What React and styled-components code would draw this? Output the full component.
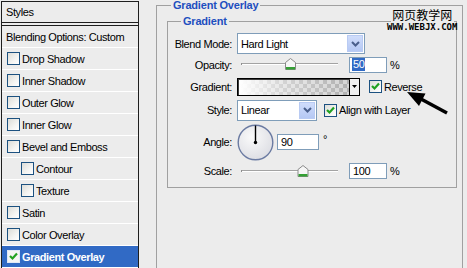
import React from 'react';
import styled, { createGlobalStyle } from 'styled-components';

const GlobalStyle = createGlobalStyle`
  html, body { margin: 0; padding: 0; background: #ececec; overflow: hidden; }
  body {
    font-family: "Liberation Sans", Arial, sans-serif;
    font-size: 11px;
    color: #000;
    letter-spacing: -0.4px;
  }
  * { box-sizing: border-box; }
`;

const Page = styled.div`
  position: relative;
  width: 467px;
  height: 268px;
  overflow: hidden;
  display: flex;
  align-items: flex-start;
  background: #ececec;
`;

/* ---------- left styles list ---------- */
const StylesPanel = styled.nav`
  margin: 1px 0 0 1px;
  width: 138px;
  height: 267px;
  border: 1px solid #1e1e1e;
  border-bottom: none;
  display: flex;
  flex-direction: column;
`;

const PanelHeader = styled.div`
  height: 22px;
  padding-left: 4px;
  display: flex;
  align-items: center;
  border-bottom: 1px solid #1e1e1e;
`;

const HeaderRule = styled.div`
  margin-top: 2px;
  height: 1px;
  border-top: 1px solid #1e1e1e;
`;

const ListRow = styled.div`
  flex: none;
  height: 22px;
  display: flex;
  align-items: center;
  gap: 2px;
  padding-left: ${(p) => p.$indent}px;
  border-bottom: 1px solid #ffffff;
  background: ${(p) => (p.$selected ? '#316ac5' : 'transparent')};
  color: ${(p) => (p.$selected ? '#ffffff' : '#000')};
  font-weight: ${(p) => (p.$selected ? 'bold' : 'normal')};
`;

const Box = styled.span`
  flex: none;
  width: 13px;
  height: 13px;
  border: 1px solid ${(p) => (p.$onDark ? '#dfe7f5' : '#1c5180')};
  background: ${(p) =>
    p.$onDark ? '#f4f4f4' : 'linear-gradient(135deg, #dcdcd7 0%, #f4f4f2 60%, #ffffff 100%)'};
  display: flex;
  align-items: center;
  justify-content: center;
`;

const Check = () => (
  <svg width="9" height="9" viewBox="0 0 9 9">
    <polyline points="1,4 3.5,6.5 8,1.5" fill="none" stroke="#21a121" strokeWidth="2.2" />
  </svg>
);

const Checkbox = ({ checked, onDark }) => (
  <Box $onDark={onDark}>{checked && <Check />}</Box>
);

/* ---------- right options ---------- */
const OuterGroup = styled.fieldset`
  margin: 0 0 0 17px;
  padding: 0;
  width: 307px;
  height: 300px;
  border: 1px solid #a0a0a0;
  border-bottom: none;
  min-inline-size: auto;
`;

const GroupTitle = styled.legend`
  margin-left: ${(p) => p.$offset}px;
  padding: 0 2px;
  font-weight: bold;
  color: #1e4fbf;
  font-size: 11px;
  line-height: 11px;
  letter-spacing: -0.2px;
`;

const InnerGroup = styled.fieldset`
  margin: 5px 0 0 10px;
  padding: 6px 0 7px 0;
  width: 290px;
  border: 1px solid #a0a0a0;
  min-inline-size: auto;
`;

const Form = styled.div`
  display: grid;
  grid-template-columns: 64px auto;
  grid-template-rows: 21px 21px 23px 24px 40px 18px;
  column-gap: 5px;
  align-items: center;
`;

const Label = styled.span`
  text-align: right;
  white-space: nowrap;
`;

const Control = styled.div`
  display: flex;
  align-items: center;
  height: 100%;
`;

const SelectBox = styled.div`
  width: ${(p) => p.$w}px;
  height: 21px;
  border: 1px solid #7f9db9;
  background: #fff;
  display: flex;
  align-items: center;
  justify-content: space-between;
  padding: 0 1px 0 3px;
`;

const SelectButton = styled.span`
  width: 16px;
  height: 17px;
  background: linear-gradient(#d0ddfb, #b5c8f4);
  border: 1px solid #b9cbf3;
  display: flex;
  align-items: center;
  justify-content: center;
`;

const Select = ({ w, value }) => (
  <SelectBox $w={w}>
    <span>{value}</span>
    <SelectButton>
      <svg width="9" height="6" viewBox="0 0 9 6">
        <polyline points="1,1 4.5,4.5 8,1" fill="none" stroke="#4a5f8c" strokeWidth="2" />
      </svg>
    </SelectButton>
  </SelectBox>
);

const NumberField = styled.div`
  margin-left: ${(p) => p.$ml}px;
  width: ${(p) => p.$w}px;
  height: 16px;
  border: 1px solid #7f9db9;
  background: #fff;
  display: flex;
  align-items: center;
  padding-left: 3px;
`;

const Selected = styled.span`
  background: #316ac5;
  color: #fff;
  line-height: 13px;
  padding: 0 1px;
  margin-left: -1px;
`;

const Unit = styled.span`
  margin-left: ${(p) => p.$ml}px;
  align-self: ${(p) => (p.$raised ? 'flex-start' : 'auto')};
  margin-top: ${(p) => (p.$raised ? '11px' : '0')};
`;

const SliderSvg = styled.svg`
  margin-left: 4px;
  flex: none;
`;

const Slider = ({ pos }) => (
  <SliderSvg width="98" height="13" viewBox="0 0 98 13">
    <rect x="0" y="5" width="97" height="1" fill="#a3a3a3" />
    <rect x="0" y="6" width="97" height="1" fill="#ffffff" />
    <rect x="0" y="5" width="1" height="2" fill="#8f8f8f" />
    <g transform={`translate(${pos - 5.5},0)`}>
      <path d="M0.5 4.5 L5.5 0.5 L10.5 4.5 V11.5 H0.5 Z" fill="#f6f6f6" stroke="#8a8a8a" />
      <rect x="1" y="9" width="9" height="2.5" fill="#34a034" />
    </g>
  </SliderSvg>
);

const GradientBar = styled.div`
  width: 123px;
  height: 18px;
  display: flex;
  border: 1px solid #000;
  box-shadow: inset 1px 1px 0 #3c3c3c;
`;

const GradientFill = styled.div`
  flex: 1;
  margin: 1px 0 0 1px;
  border-right: 1px solid #000;
  background:
    linear-gradient(to right, #ffffff 0%, rgba(255, 255, 255, 0.45) 40%, rgba(255, 255, 255, 0) 100%),
    repeating-conic-gradient(#b0b0b0 0 25%, #d4d4d4 0 50%) 0 0 / 8px 8px;
`;

const GradientArrow = styled.div`
  width: 9px;
  background: #f0f0f0;
  display: flex;
  align-items: center;
  justify-content: center;
`;

const Inline = styled.span`
  margin-left: ${(p) => p.$ml}px;
  display: inline-flex;
`;

const TextAfter = styled.span`
  margin-left: ${(p) => p.$ml}px;
  white-space: nowrap;
`;

const DialSvg = styled.svg`
  flex: none;
`;

const Dial = () => (
  <DialSvg width="37" height="37" viewBox="0 0 37 37">
    <defs>
      <radialGradient id="dialFill" cx="40%" cy="35%" r="70%">
        <stop offset="0" stopColor="#fafafa" />
        <stop offset="1" stopColor="#dcdde3" />
      </radialGradient>
    </defs>
    <circle cx="18.5" cy="18.5" r="17.3" fill="url(#dialFill)" stroke="#6b7ba2" strokeWidth="1.4" />
    <line x1="18.5" y1="1.5" x2="18.5" y2="18.5" stroke="#000" strokeWidth="1.4" />
    <circle cx="18.5" cy="18.5" r="1.7" fill="#000" />
  </DialSvg>
);

/* ---------- overlays ---------- */
const Watermark = styled.div`
  position: absolute;
  left: 387px;
  top: 8px;
  display: flex;
  flex-direction: column;
  align-items: center;
  letter-spacing: 0;
`;

const WatermarkCN = styled.span`
  background: #ececec;
  width: 63px;
  text-align: center;
  font-family: "Noto Sans CJK SC", sans-serif;
  font-size: 12px;
  line-height: 14px;
  color: #000;
`;

const WatermarkURL = styled.span`
  margin-top: 1px;
  font-family: "DejaVu Sans Mono", monospace;
  font-weight: bold;
  font-size: 9px;
  line-height: 9px;
  color: #000;
`;

const ArrowSvg = styled.svg`
  position: absolute;
  left: 400px;
  top: 86px;
`;

const items = [
  { name: 'Drop Shadow', indent: 5 },
  { name: 'Inner Shadow', indent: 5 },
  { name: 'Outer Glow', indent: 5 },
  { name: 'Inner Glow', indent: 5 },
  { name: 'Bevel and Emboss', indent: 5 },
  { name: 'Contour', indent: 19 },
  { name: 'Texture', indent: 19 },
  { name: 'Satin', indent: 5 },
  { name: 'Color Overlay', indent: 5 },
  { name: 'Gradient Overlay', indent: 5, selected: true },
];

export default function App() {
  return (
    <>
      <GlobalStyle />
      <Page>
        <StylesPanel>
          <PanelHeader>Styles</PanelHeader>
          <HeaderRule />
          <ListRow $indent={4}>Blending Options: Custom</ListRow>
          {items.map((it) => (
            <ListRow key={it.name} $indent={it.indent} $selected={it.selected}>
              <Checkbox checked={it.selected} onDark={it.selected} />
              <span>{it.name}</span>
            </ListRow>
          ))}
        </StylesPanel>

        <OuterGroup>
          <GroupTitle $offset={14}>Gradient Overlay</GroupTitle>
          <InnerGroup>
            <GroupTitle $offset={13}>Gradient</GroupTitle>
            <Form>
              <Label>Blend Mode:</Label>
              <Control>
                <Select w={128} value="Hard Light" />
              </Control>

              <Label>Opacity:</Label>
              <Control>
                <Slider pos={49.5} />
                <NumberField $ml={10} $w={38}>
                  <Selected>50</Selected>
                </NumberField>
                <Unit $ml={3}>%</Unit>
              </Control>

              <Label>Gradient:</Label>
              <Control>
                <GradientBar>
                  <GradientFill />
                  <GradientArrow>
                    <svg width="5" height="3" viewBox="0 0 5 3">
                      <polygon points="0,0 5,0 2.5,3" fill="#000" />
                    </svg>
                  </GradientArrow>
                </GradientBar>
                <Inline $ml={9}>
                  <Checkbox checked />
                </Inline>
                <TextAfter $ml={2}>Reverse</TextAfter>
              </Control>

              <Label>Style:</Label>
              <Control>
                <Select w={80} value="Linear" />
                <Inline $ml={7}>
                  <Checkbox checked />
                </Inline>
                <TextAfter $ml={2}>Align with Layer</TextAfter>
              </Control>

              <Label>Angle:</Label>
              <Control>
                <Dial />
                <NumberField $ml={3} $w={42}>90</NumberField>
                <Unit $ml={4} $raised>°</Unit>
              </Control>

              <Label>Scale:</Label>
              <Control>
                <Slider pos={62} />
                <NumberField $ml={10} $w={38}>100</NumberField>
                <Unit $ml={3}>%</Unit>
              </Control>
            </Form>
          </InnerGroup>
        </OuterGroup>

        <Watermark>
          <WatermarkCN>网页教学网</WatermarkCN>
          <WatermarkURL>WWW.WEBJX.COM</WatermarkURL>
        </Watermark>

        <ArrowSvg width="52" height="32" viewBox="0 0 52 32">
          <line x1="21" y1="13" x2="47" y2="27" stroke="#000" strokeWidth="3.5" />
          <polygon points="7,6 25.5,7.5 19,20" fill="#000" />
        </ArrowSvg>
      </Page>
    </>
  );
}
